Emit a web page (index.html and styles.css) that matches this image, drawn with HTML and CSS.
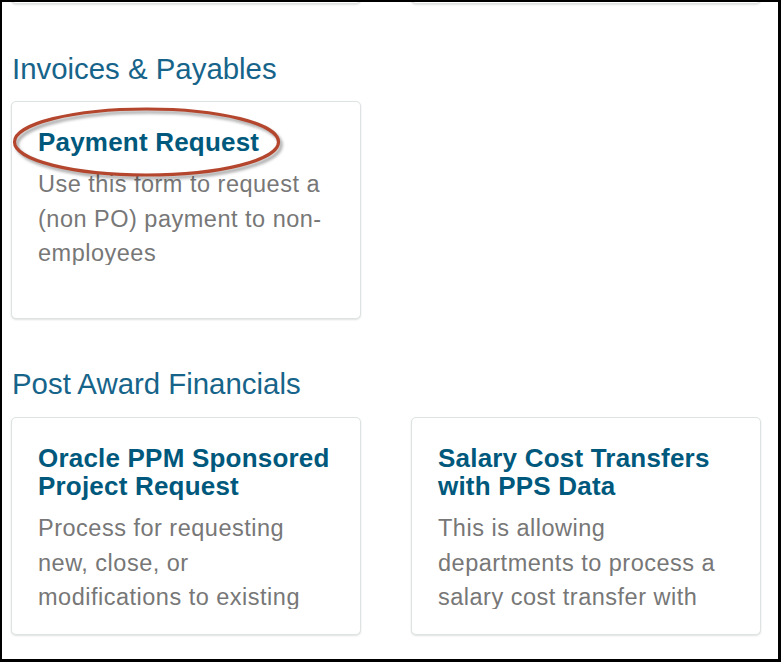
FILE: index.html
```html
<!DOCTYPE html>
<html lang="en">
<head>
<meta charset="utf-8">
<title>Forms</title>
<link rel="stylesheet" href="styles.css">
</head>
<body>
<div class="frame">
  <div class="page">
    <div class="cards cards-cut">
      <div class="card"></div>
      <div class="card"></div>
    </div>

    <section class="group">
      <h2 class="group-title">Invoices &amp; Payables</h2>
      <div class="cards">
        <a class="card" href="#">
          <h3 class="card-title">Payment Request</h3>
          <p class="card-text">Use this form to request a (non PO) payment to non-employees</p>
          <svg class="annot" width="290" height="90" viewBox="0 0 290 90" aria-hidden="true">
            <defs>
              <filter id="sh" x="-10%" y="-30%" width="120%" height="160%">
                <feGaussianBlur stdDeviation="1.6"/>
              </filter>
            </defs>
            <ellipse cx="137" cy="43" rx="132" ry="33" fill="none" stroke="rgba(0,0,0,0.35)" stroke-width="3.2" filter="url(#sh)"/>
            <ellipse cx="134.5" cy="40" rx="132" ry="33" fill="none" stroke="#b4462e" stroke-width="3.2"/>
          </svg>
        </a>
      </div>
    </section>

    <section class="group">
      <h2 class="group-title">Post Award Financials</h2>
      <div class="cards">
        <a class="card" href="#">
          <h3 class="card-title">Oracle PPM Sponsored Project Request</h3>
          <p class="card-text">Process for requesting new, close, or modifications to existing sponsored projects in Oracle PPM.</p>
        </a>
        <a class="card" href="#">
          <h3 class="card-title">Salary Cost Transfers with PPS Data</h3>
          <p class="card-text">This is allowing departments to process a salary cost transfer with PPS data for prior periods.</p>
        </a>
      </div>
    </section>
  </div>
</div>
</body>
</html>
```

FILE: styles.css
```css
html, body {
  margin: 0;
  padding: 0;
  background: #ffffff;
}

.frame {
  box-sizing: border-box;
  width: 781px;
  height: 662px;
  border-style: solid;
  border-color: #000;
  border-width: 2px 3px 3px 2px;
  overflow: hidden;
  background: #fff;
}

.page {
  padding: 0 0 0 9px;
  font-family: "Liberation Sans", Arial, sans-serif;
}

.cards {
  display: flex;
  gap: 50px;
}

.cards-cut {
  margin-top: -216px;
}

.card {
  position: relative;
  box-sizing: border-box;
  width: 350px;
  height: 218px;
  padding: 26px 26px 0 26px;
  border: 1px solid #dde2e2;
  border-radius: 5px;
  box-shadow: 0 1px 2px rgba(0, 0, 0, 0.12);
  background: #fff;
  text-decoration: none;
  display: block;
  flex: none;
}

.group {
  margin-top: 49px;
}

.group-title {
  margin: 0 0 16px 1px;
  font-size: 29.4px;
  line-height: 32.4px;
  font-weight: normal;
  color: #16648a;
}

.card-title {
  margin: 0 0 10.5px 0;
  font-size: 26px;
  line-height: 28.5px;
  letter-spacing: 0.2px;
  font-weight: bold;
  color: #00597c;
}

.card-text {
  margin: 0;
  font-size: 23.5px;
  line-height: 34.3px;
  letter-spacing: 0.5px;
  color: #777777;
  max-height: 98px;
  overflow: hidden;
}

.annot {
  position: absolute;
  left: 0;
  top: 0;
  overflow: visible;
  pointer-events: none;
}
```
